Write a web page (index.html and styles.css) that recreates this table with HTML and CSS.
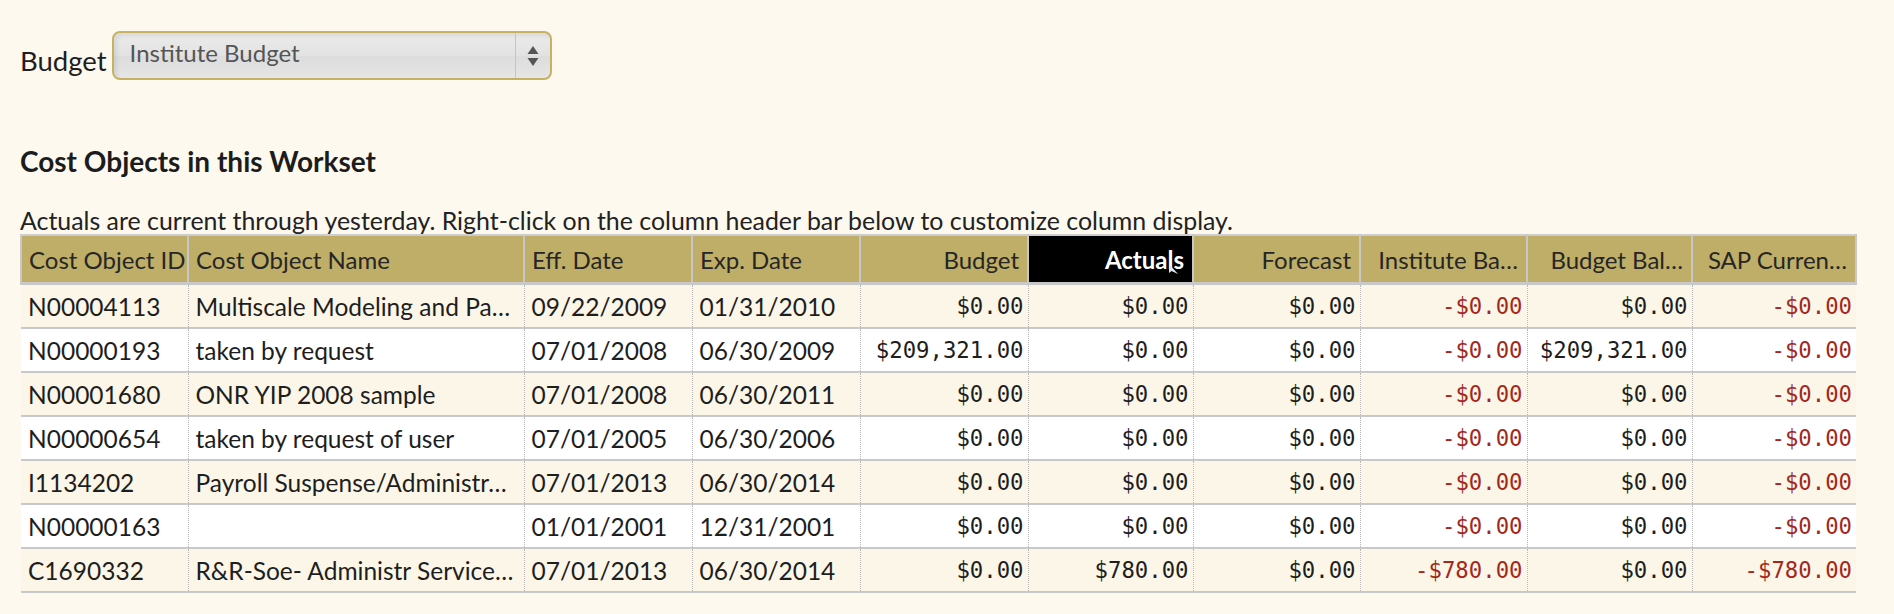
FILE: index.html
```html
<!DOCTYPE html>
<html>
<head>
<meta charset="utf-8">
<title>Cost Objects</title>
<link rel="stylesheet" href="styles.css">
</head>
<body>
<div class="page">
  <div class="budget-row">
    <label class="budget-label">Budget</label>
    <div class="select">
      <span class="select-text">Institute Budget</span>
      <span class="select-arrows">
        <svg width="12" height="22" viewBox="0 0 12 22"><path d="M6 1 L11.5 9 L0.5 9 Z" fill="#555"/><path d="M0.5 13 L11.5 13 L6 21 Z" fill="#555"/></svg>
      </span>
    </div>
  </div>

  <h2 class="section-title">Cost Objects in this Workset</h2>
  <p class="note">Actuals are current through yesterday. Right-click on the column header bar below to customize column display.</p>

  <table class="grid">
    <colgroup>
      <col style="width:167px"><col style="width:336px"><col style="width:168px"><col style="width:168px"><col style="width:168px"><col style="width:165px"><col style="width:167px"><col style="width:167px"><col style="width:165px"><col style="width:164px">
    </colgroup>
    <thead>
      <tr>
        <th>Cost Object ID</th>
        <th>Cost Object Name</th>
        <th>Eff. Date</th>
        <th>Exp. Date</th>
        <th class="num">Budget</th>
        <th class="num active">Actuals<svg class="cursor" width="12" height="12" viewBox="0 0 12 12"><path d="M1 1 L1 10 L3.5 8 L10 11 Z" fill="#e6e6e6"/></svg></th>
        <th class="num">Forecast</th>
        <th class="num">Institute Ba…</th>
        <th class="num">Budget Bal…</th>
        <th class="num">SAP Curren…</th>
      </tr>
    </thead>
    <tbody>
      <tr>
        <td>N00004113</td><td>Multiscale Modeling and Pa…</td><td>09/22/2009</td><td>01/31/2010</td>
        <td class="num">$0.00</td><td class="num">$0.00</td><td class="num">$0.00</td><td class="num neg">-$0.00</td><td class="num">$0.00</td><td class="num neg">-$0.00</td>
      </tr>
      <tr>
        <td>N00000193</td><td>taken by request</td><td>07/01/2008</td><td>06/30/2009</td>
        <td class="num">$209,321.00</td><td class="num">$0.00</td><td class="num">$0.00</td><td class="num neg">-$0.00</td><td class="num">$209,321.00</td><td class="num neg">-$0.00</td>
      </tr>
      <tr>
        <td>N00001680</td><td>ONR YIP 2008 sample</td><td>07/01/2008</td><td>06/30/2011</td>
        <td class="num">$0.00</td><td class="num">$0.00</td><td class="num">$0.00</td><td class="num neg">-$0.00</td><td class="num">$0.00</td><td class="num neg">-$0.00</td>
      </tr>
      <tr>
        <td>N00000654</td><td>taken by request of user</td><td>07/01/2005</td><td>06/30/2006</td>
        <td class="num">$0.00</td><td class="num">$0.00</td><td class="num">$0.00</td><td class="num neg">-$0.00</td><td class="num">$0.00</td><td class="num neg">-$0.00</td>
      </tr>
      <tr>
        <td>I1134202</td><td>Payroll Suspense/Administr…</td><td>07/01/2013</td><td>06/30/2014</td>
        <td class="num">$0.00</td><td class="num">$0.00</td><td class="num">$0.00</td><td class="num neg">-$0.00</td><td class="num">$0.00</td><td class="num neg">-$0.00</td>
      </tr>
      <tr>
        <td>N00000163</td><td></td><td>01/01/2001</td><td>12/31/2001</td>
        <td class="num">$0.00</td><td class="num">$0.00</td><td class="num">$0.00</td><td class="num neg">-$0.00</td><td class="num">$0.00</td><td class="num neg">-$0.00</td>
      </tr>
      <tr>
        <td>C1690332</td><td>R&amp;R-Soe- Administr Service…</td><td>07/01/2013</td><td>06/30/2014</td>
        <td class="num">$0.00</td><td class="num">$780.00</td><td class="num">$0.00</td><td class="num neg">-$780.00</td><td class="num">$0.00</td><td class="num neg">-$780.00</td>
      </tr>
    </tbody>
  </table>
</div>
</body>
</html>
```

FILE: styles.css
```css
html, body {
  margin: 0;
  padding: 0;
}
body {
  background: #fdf9ee;
  font-family: Lato, "Noto Sans", sans-serif;
  color: #222;
}
.page {
  padding: 31px 0 0 20px;
}
.budget-row {
  display: flex;
  align-items: center;
  gap: 5px;
  height: 49px;
}
.budget-label {
  font-size: 27.5px;
  padding-top: 10px;
  color: #1e1e1e;
}
.select {
  width: 440px;
  height: 49px;
  box-sizing: border-box;
  border: 2px solid #c6b262;
  border-radius: 8px;
  background: linear-gradient(#ececec 0%, #e2e2e2 50%, #dcdcdc 51%, #e6e6e6 100%);
  box-shadow: inset 3px 3px 4px rgba(0,0,0,0.08);
  display: flex;
  align-items: stretch;
}
.select-text {
  flex: 1;
  font-size: 24px;
  color: #555;
  padding: 5px 0 0 16px;
}
.select-arrows {
  width: 34px;
  border-left: 1px solid #c4c4c4;
  display: flex;
  align-items: center;
  justify-content: center;
}
.section-title {
  margin: 66px 0 0 0;
  font-size: 28px;
  font-weight: bold;
  color: #1c1c1c;
  line-height: 30px;
}
.note {
  margin: 30px 0 0 0;
  font-size: 24.9px;
  line-height: 28px;
  color: #222;
}
.grid {
  margin-top: 0;
  border-collapse: collapse;
  table-layout: fixed;
  width: 1835px;
}
.grid th {
  background: #bfae67;
  color: #262626;
  font-weight: normal;
  font-size: 24px;
  text-align: left;
  height: 46px;
  padding: 0 6px 0 7px;
  border-top: 2px solid #cdcdcd;
  border-bottom: 3px solid #c8c8c8;
  border-left: 2px solid #c8c8c8;
  border-right: 2px solid #c8c8c8;
  white-space: nowrap;
  overflow: hidden;
}
.grid th.num {
  text-align: right;
  padding-right: 8px;
}
.grid th.active {
  background: #000;
  color: #fff;
  font-weight: bold;
  position: relative;
}
.cursor {
  position: absolute;
  right: 12px;
  top: 27px;
}
.grid td {
  height: 42px;
  padding: 0 5px 0 7px;
  font-size: 24.5px;
  color: #1e1e1e;
  border-bottom: 2px solid #c8c8c8;
  border-left: 1px dotted #b8b8b8;
  border-right: 1px dotted #b8b8b8;
  white-space: nowrap;
  overflow: hidden;
}
.grid td:first-child {
  border-left: none;
}
.grid td:last-child {
  border-right: none;
}
.grid tbody tr:nth-child(odd) td {
  background: #fbf6e8;
}
.grid tbody tr:nth-child(even) td {
  background: #ffffff;
}
.grid td.num {
  text-align: right;
  font-family: "DejaVu Sans Mono", monospace;
  font-size: 22.3px;
  padding-right: 4px;
}
.grid td.neg {
  color: #a3281b;
}
```
